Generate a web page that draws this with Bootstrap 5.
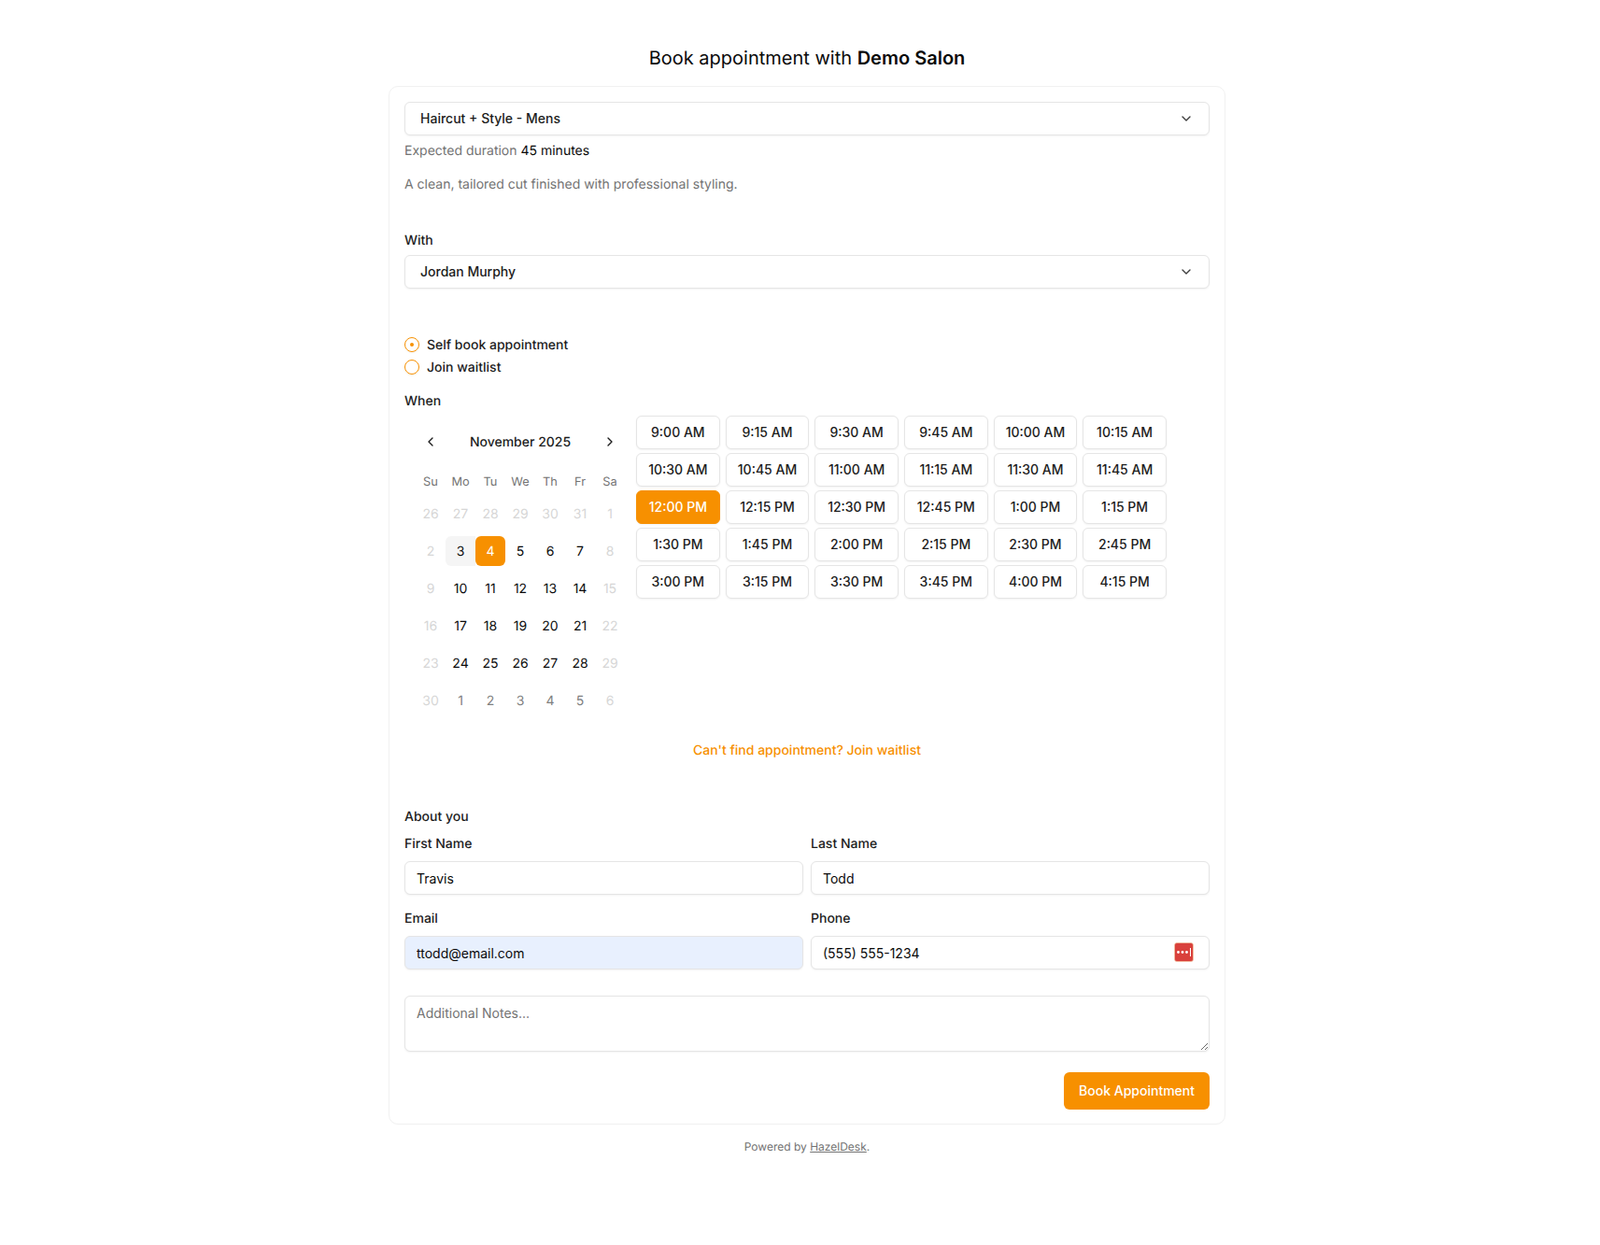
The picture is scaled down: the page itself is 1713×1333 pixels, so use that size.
<!DOCTYPE html>
<html lang="en">
<head>
  <meta charset="UTF-8">
  <title>Book appointment with Demo Salon</title>
  <link href="https://cdn.jsdelivr.net/npm/bootstrap@5.3.3/dist/css/bootstrap.min.css" rel="stylesheet">
  <style>
    body {
      background-color: #fff;
      color: #1c1c1c;
      font-family: "Inter", "Liberation Sans", sans-serif;
      font-size: 14px;
      line-height: 20px;
      text-rendering: geometricPrecision;
    }
    .page-wrap { width: 896px; margin-left: 416px; padding-top: 48px; }
    .page-title { font-size: 20px; line-height: 28px; font-weight: 400; margin: 0 0 16px; color: #0a0a0a; }
    .page-title b { font-weight: 600; }
    .book-card { border: 1px solid #f1f1f1; border-radius: 10px; padding: 16px; height: 1112px; box-shadow: 0 1px 1px rgba(0,0,0,.01); }
    .pick-btn {
      display: flex; align-items: center; justify-content: space-between;
      width: 100%; height: 36px; padding: 0 16px; background: #fff; color: #1c1c1c;
      border: 1px solid #e5e5e5; border-radius: 6px; font-size: 14px; font-weight: 500;
      box-shadow: 0 1px 2px rgba(0,0,0,.05);
    }
    .pick-btn svg { width: 16px; height: 16px; opacity: .85; }
    .txt-line { line-height: 22px; margin-bottom: -2px; }
    .muted-text { color: #737373; }
    .strong-text { font-weight: 400; color: #0a0a0a; }
    .fw-label { font-weight: 500; }
    .sp-6 { margin-top: 6px; }
    .sp-16 { margin-top: 16px; }
    .sp-15 { margin-top: 15px; }
    .sp-40 { margin-top: 40px; }
    .radio-row { display: flex; align-items: center; gap: 8px; height: 24px; font-weight: 500; }
    .radio-row span:last-child { padding-top: 2px; }
    .radio-first { margin-top: 48px; }
    .radio-dot {
      width: 16px; height: 16px; border: 1px solid #f79000; border-radius: 50%;
      display: flex; align-items: center; justify-content: center; box-shadow: 0 1px 2px rgba(0,0,0,.05);
    }
    .radio-dot i { width: 4px; height: 4px; border-radius: 50%; background: #f79000; display: block; }
    .when-label { margin-top: 14px; }
    .when-row { display: flex; margin-top: 6px; }
    .cal-box { width: 248px; padding: 12px; flex: none; }
    .cal-head { display: flex; align-items: center; justify-content: space-between; height: 32px; padding: 0 8px; font-weight: 500; }
    .cal-head span { padding-top: 2px; }
    .cal-head svg { width: 16px; height: 16px; display: block; }
    .cal-grid { display: grid; grid-template-columns: repeat(7, 32px); margin-top: 17px; }
    .wd { text-align: center; font-size: 12.8px; color: #737373; height: 20px; line-height: 22px; margin-bottom: 8px; }
    .dy { width: 32px; height: 32px; line-height: 34px; text-align: center; margin-bottom: 8px; font-weight: 400; border-radius: 6px; color: #0a0a0a; }
    .dy.out { color: #808080; }
    .dy.off { color: #d6d6d6; }
    .dy.today { background: #f5f5f5; border-radius: 6px 0 0 6px; }
    .dy.sel { background: #f79000; color: #fff; }
    .slot-grid { display: grid; grid-template-columns: repeat(6, 89.67px); column-gap: 6px; row-gap: 4px; align-content: start; }
    .slot-btn {
      height: 36px; padding: 0; font-size: 14px; line-height: 20px; font-weight: 500; color: #1c1c1c;
      background: #fff; border: 1px solid #e5e5e5; border-radius: 6px; box-shadow: 0 1px 2px rgba(0,0,0,.05);
    }
    .slot-btn.on { background: #f79000; border-color: #f79000; color: #fff; }
    .wait-link { color: #f79000; font-weight: 500; text-decoration: none; display: block; text-align: center; margin-top: 7px; }
    .about-label { margin-top: 51px; }
    .about-row { margin-top: 9px; }
    .field-row { display: grid; grid-template-columns: 1fr 1fr; column-gap: 8px; }
    .field-label { font-weight: 500; height: 20px; line-height: 22px; margin-bottom: 9px; display: block; }
    .field-input.form-control {
      height: 36px; padding: 0 12px; font-size: 14px; line-height: 20px; color: #0a0a0a;
      border: 1px solid #e5e5e5; border-radius: 6px; box-shadow: 0 1px 2px rgba(0,0,0,.05);
    }
    .field-input.autofill.form-control { background: #e8f0fe; }
    .phone-wrap { position: relative; }
    .pw-icon { position: absolute; right: 17px; top: 7px; width: 21px; height: 21px; display: block; }
    .notes-input.form-control {
      height: 60px; margin-top: 28px; padding: 8px 12px; font-size: 14px; line-height: 20px; color: #0a0a0a;
      border: 1px solid #e5e5e5; border-radius: 6px; box-shadow: 0 1px 2px rgba(0,0,0,.05);
    }
    .notes-input.form-control::placeholder { color: #737373; }
    .book-row { margin-top: 22px; }
    .book-btn {
      height: 40px; padding: 0 16px 1px; background: #f79000; color: #fff; font-size: 14px; font-weight: 500;
      border: 0; border-radius: 6px;
    }
    .book-btn:hover { background: #f79000; color: #fff; }
    .foot-note { font-size: 12px; line-height: 16px; color: #737373; text-align: center; margin-top: 16px; }
    .foot-note a { color: #737373; }
  </style>
</head>
<body>

<div class="page-wrap">
  <h1 class="page-title text-center">Book appointment with <b>Demo Salon</b></h1>

  <div class="book-card">
    <button type="button" class="pick-btn">
      <span>Haircut + Style - Mens</span>
      <svg viewBox="0 0 24 24" fill="none" stroke="currentColor" stroke-width="2" stroke-linecap="round" stroke-linejoin="round"><path d="m6 9 6 6 6-6"/></svg>
    </button>
    <div class="sp-6 muted-text txt-line">Expected duration <span class="strong-text">45 minutes</span></div>
    <div class="sp-16 muted-text txt-line">A clean, tailored cut finished with professional styling.</div>

    <div class="sp-40 fw-label txt-line">With</div>
    <button type="button" class="pick-btn sp-6">
      <span>Jordan Murphy</span>
      <svg viewBox="0 0 24 24" fill="none" stroke="currentColor" stroke-width="2" stroke-linecap="round" stroke-linejoin="round"><path d="m6 9 6 6 6-6"/></svg>
    </button>

    <div class="radio-row radio-first">
      <span class="radio-dot"><i></i></span><span>Self book appointment</span>
    </div>
    <div class="radio-row">
      <span class="radio-dot"></span><span>Join waitlist</span>
    </div>

    <div class="fw-label txt-line when-label">When</div>
    <div class="when-row">
      <div class="cal-box">
        <div class="cal-head">
          <svg viewBox="0 0 24 24" fill="none" stroke="currentColor" stroke-width="2" stroke-linecap="round" stroke-linejoin="round"><path d="m15 18-6-6 6-6"/></svg>
          <span>November 2025</span>
          <svg viewBox="0 0 24 24" fill="none" stroke="currentColor" stroke-width="2" stroke-linecap="round" stroke-linejoin="round"><path d="m9 18 6-6-6-6"/></svg>
        </div>
        <div class="cal-grid" id="calGrid"></div>
      </div>
      <div class="slot-grid" id="slotGrid"></div>
    </div>

    <a href="#" class="wait-link txt-line">Can't find appointment? Join waitlist</a>

    <div class="fw-label txt-line about-label">About you</div>
    <div class="field-row about-row">
      <div>
        <label class="field-label">First Name</label>
        <input class="form-control field-input" type="text" value="Travis">
      </div>
      <div>
        <label class="field-label">Last Name</label>
        <input class="form-control field-input" type="text" value="Todd">
      </div>
    </div>
    <div class="field-row sp-15">
      <div>
        <label class="field-label">Email</label>
        <input class="form-control field-input autofill" type="text" value="ttodd@email.com">
      </div>
      <div>
        <label class="field-label">Phone</label>
        <div class="phone-wrap">
          <input class="form-control field-input" type="text" value="(555) 555-1234">
          <svg class="pw-icon" viewBox="0 0 21 21">
            <rect x="0.5" y="0.5" width="20" height="20" rx="2.5" fill="#d9413c" stroke="#f6d2a8" stroke-width=".6"/>
            <circle cx="4.5" cy="10.5" r="1.4" fill="#fff"/>
            <circle cx="9" cy="10.5" r="1.4" fill="#fff"/>
            <circle cx="13.5" cy="10.5" r="1.4" fill="#fff"/>
            <rect x="17" y="6" width="1" height="9" fill="#fff"/>
          </svg>
        </div>
      </div>
    </div>
    <textarea class="form-control notes-input" placeholder="Additional Notes..."></textarea>
    <div class="d-flex justify-content-end book-row">
      <button type="button" class="btn book-btn">Book Appointment</button>
    </div>
  </div>

  <p class="foot-note">Powered by <a href="#">HazelDesk</a>.</p>
</div>

<script src="https://cdn.jsdelivr.net/npm/bootstrap@5.3.3/dist/js/bootstrap.bundle.min.js"></script>
<script>
  // calendar cells
  const days = [
    [26,'off'],[27,'off'],[28,'off'],[29,'off'],[30,'off'],[31,'off'],[1,'off'],
    [2,'off'],[3,'today'],[4,'sel'],[5,''],[6,''],[7,''],[8,'off'],
    [9,'off'],[10,''],[11,''],[12,''],[13,''],[14,''],[15,'off'],
    [16,'off'],[17,''],[18,''],[19,''],[20,''],[21,''],[22,'off'],
    [23,'off'],[24,''],[25,''],[26,''],[27,''],[28,''],[29,'off'],
    [30,'off'],[1,'out'],[2,'out'],[3,'out'],[4,'out'],[5,'out'],[6,'off']
  ];
  let cal = '';
  ['Su','Mo','Tu','We','Th','Fr','Sa'].forEach(d => { cal += '<div class="wd">' + d + '</div>'; });
  days.forEach(d => { cal += '<div class="dy ' + d[1] + '">' + d[0] + '</div>'; });
  document.getElementById('calGrid').innerHTML = cal;

  // time slots
  const slots = ['9:00 AM','9:15 AM','9:30 AM','9:45 AM','10:00 AM','10:15 AM',
    '10:30 AM','10:45 AM','11:00 AM','11:15 AM','11:30 AM','11:45 AM',
    '12:00 PM','12:15 PM','12:30 PM','12:45 PM','1:00 PM','1:15 PM',
    '1:30 PM','1:45 PM','2:00 PM','2:15 PM','2:30 PM','2:45 PM',
    '3:00 PM','3:15 PM','3:30 PM','3:45 PM','4:00 PM','4:15 PM'];
  document.getElementById('slotGrid').innerHTML = slots.map(s =>
    '<button type="button" class="slot-btn' + (s === '12:00 PM' ? ' on' : '') + '">' + s + '</button>').join('');
</script>
</body>
</html>
